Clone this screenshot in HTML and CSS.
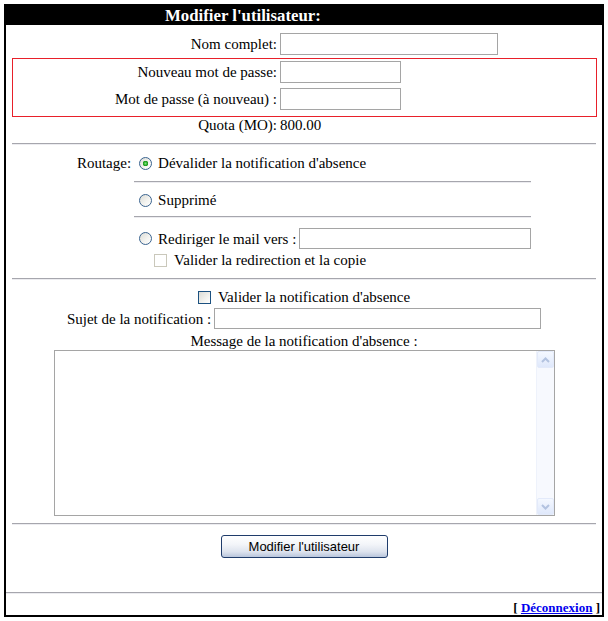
FILE: index.html
```html
<!DOCTYPE html>
<html lang="fr">
<head>
<meta charset="utf-8">
<title>Modifier l'utilisateur</title>
<link rel="stylesheet" href="styles.css">
</head>
<body>
<div class="frame">
  <div class="title">Modifier l'utilisateur:</div>
  <div class="main">
    <div class="frow nom">
      <label class="flbl">Nom complet:</label>
      <input class="txt w-nom" type="text">
    </div>
    <div class="pwbox">
      <div class="frow">
        <label class="flbl in">Nouveau mot de passe:</label>
        <input class="txt w-pw" type="password">
      </div>
      <div class="frow gap">
        <label class="flbl in">Mot de passe (à nouveau) :</label>
        <input class="txt w-pw" type="password">
      </div>
    </div>
    <div class="frow quota">
      <span class="flbl">Quota (MO):</span>
      <span class="val">800.00</span>
    </div>
    <hr class="sep first">
    <div class="route">
      <div class="rlbl">Routage:</div>
      <div class="opts">
        <label class="opt o1"><input type="radio" name="r" class="rad" checked>Dévalider la notification d'absence</label>
        <hr class="sep inner">
        <label class="opt o2"><input type="radio" name="r" class="rad">Supprimé</label>
        <hr class="sep inner">
        <div class="o3">
          <label class="opt"><input type="radio" name="r" class="rad">Rediriger le mail vers :<input class="txt w-red" type="text"></label>
          <label class="opt sub"><input type="checkbox" class="chk dis" disabled>Valider la redirection et la copie</label>
        </div>
      </div>
    </div>
    <hr class="sep">
    <label class="crow"><input type="checkbox" class="chk act">Valider la notification d'absence</label>
    <div class="crow sujet">
      <label>Sujet de la notification :</label>
      <input class="txt w-suj" type="text">
    </div>
    <div class="crow msg">Message de la notification d'absence :</div>
    <div class="msgbox">
      <textarea class="ta"></textarea>
      <div class="sbar">
        <div class="sbtn"><svg width="9" height="6" viewBox="0 0 9 6"><path d="M1 5 L4.5 1.5 L8 5" fill="none" stroke="#b3c3e0" stroke-width="2"/></svg></div>
        <div class="strack"></div>
        <div class="sbtn"><svg width="9" height="6" viewBox="0 0 9 6"><path d="M1 1 L4.5 4.5 L8 1" fill="none" stroke="#b3c3e0" stroke-width="2"/></svg></div>
      </div>
    </div>
    <hr class="sep">
    <div class="btnrow"><button class="xpbtn" type="button">Modifier l'utilisateur</button></div>
  </div>
  <div class="footer">
    <hr class="sep full">
    <div class="links">[ <a href="#" class="logout">Déconnexion</a> ]</div>
  </div>
</div>
</body>
</html>
```

FILE: styles.css
```css
html, body {
  margin: 0;
  padding: 0;
  background: #fff;
}
body {
  padding: 4px;
  font-family: "Liberation Serif", "Times New Roman", serif;
  font-size: 15px;
  line-height: 18px;
  color: #000;
}
.frame {
  border: 2px solid #000;
  height: 613px;
  box-sizing: border-box;
  display: flex;
  flex-direction: column;
}
.title {
  background: #000;
  color: #fff;
  font-weight: bold;
  font-size: 16.8px;
  height: 19px;
  line-height: 19px;
  padding-left: 159px;
}
.main {
  display: flex;
  flex-direction: column;
}
.frow {
  display: flex;
  align-items: center;
}
.flbl {
  width: 271px;
  margin-right: 3px;
  text-align: right;
  white-space: nowrap;
}
.flbl.in {
  width: 264px;
}
.nom {
  margin-top: 8px;
}
.txt {
  height: 22px;
  box-sizing: border-box;
  border: 1px solid #a5a5a5;
  padding: 0 2px;
  margin: 0;
  font: inherit;
  background: #fff;
}
.w-nom { width: 218px; }
.w-pw { width: 121px; }
.w-red { width: 236px; margin-left: 3px; height: 21px; }
.w-suj { width: 327px; margin-left: 3px; height: 21px; }
.pwbox {
  margin: 3px 5px 0 6px;
  border: 1px solid #e8202a;
  padding: 2px 0 6px 0;
}
.pwbox .gap {
  margin-top: 5px;
}
.quota {
  height: 18px;
  line-height: 16px;
  padding-bottom: 2px;
  box-sizing: border-box;
}
.sep {
  border: 0;
  border-top: 1px solid #a6a6ad;
  border-bottom: 1px solid #ececf0;
  margin: 0 6px;
  height: 0;
}
.sep.first {
  margin-top: 8px;
}
.route {
  display: flex;
  justify-content: center;
}
.rlbl {
  margin-right: 3px;
  padding-top: 9px;
}
.opts {
  width: 397px;
}
.sep.inner {
  margin: 0;
}
.opt {
  display: flex;
  align-items: center;
  padding-left: 5px;
  white-space: nowrap;
}
.o1 {
  padding-top: 9px;
  padding-bottom: 9px;
}
.o2 {
  padding-top: 8px;
  padding-bottom: 7px;
}
.o3 {
  padding-top: 10px;
  padding-bottom: 9px;
}
.o3 .sub {
  padding-left: 20px;
  margin-top: 2px;
}
.rad {
  appearance: none;
  -webkit-appearance: none;
  width: 13px;
  height: 13px;
  margin: 0 6px 0 0;
  border: 1px solid #3a638f;
  border-radius: 50%;
  box-sizing: border-box;
  background: linear-gradient(135deg, #dcdcd6 0%, #f4f4f1 60%, #ffffff 100%);
  flex: none;
}
.rad:checked {
  background:
    radial-gradient(circle at 50% 50%, #7ee27e 0, #2fb32f 1.6px, #1c8f1c 2.6px, rgba(0,0,0,0) 3px),
    linear-gradient(135deg, #dcdcd6 0%, #f4f4f1 60%, #ffffff 100%);
}
.chk {
  appearance: none;
  -webkit-appearance: none;
  width: 13px;
  height: 13px;
  margin: 0 7px 0 0;
  box-sizing: border-box;
  flex: none;
}
.chk.dis {
  border: 1px solid #cac8bb;
  background: #fff;
}
.chk.act {
  border: 1px solid #1c5180;
  background: linear-gradient(135deg, #dcdcd6 0%, #f2f2ee 60%, #ffffff 100%);
}
.crow {
  display: flex;
  justify-content: center;
  align-items: center;
  white-space: nowrap;
}
label.crow {
  margin-top: 8px;
}
.sujet {
  margin-top: 2px;
}
.msg {
  margin-top: 3px;
}
.msgbox {
  align-self: center;
  width: 501px;
  height: 166px;
  box-sizing: border-box;
  border: 1px solid #a5a5a5;
  display: flex;
  margin-bottom: 7px;
}
.ta {
  flex: 1;
  border: 0;
  margin: 0;
  padding: 2px;
  resize: none;
  outline: none;
  font: inherit;
}
.sbar {
  width: 17px;
  display: flex;
  flex-direction: column;
  background: #f7f9fe;
  border-left: 1px solid #eef2fb;
}
.sbtn {
  height: 17px;
  box-sizing: border-box;
  border: 1px solid #e3eafa;
  border-radius: 2px;
  background: linear-gradient(180deg, #f4f8ff 0%, #dfe8fb 100%);
  display: flex;
  align-items: center;
  justify-content: center;
}
.strack {
  flex: 1;
}
.btnrow {
  display: flex;
  justify-content: center;
  margin-top: 10px;
}
.xpbtn {
  width: 167px;
  height: 23px;
  box-sizing: border-box;
  border: 1px solid #1f3c6b;
  border-radius: 3px;
  background: linear-gradient(180deg, #ffffff 0%, #f3f5f9 40%, #dde3ee 75%, #b9c6dc 100%);
  font-family: "Liberation Sans", Arial, sans-serif;
  font-size: 13px;
  color: #000;
  padding: 0;
}
.footer {
  margin-top: auto;
}
.sep.full {
  margin: 0 0 7px 0;
}
.links {
  text-align: right;
  font-weight: bold;
  font-size: 13px;
  line-height: 14px;
  padding-right: 2px;
}
.logout {
  color: #0000ee;
  text-decoration: underline;
}
```
